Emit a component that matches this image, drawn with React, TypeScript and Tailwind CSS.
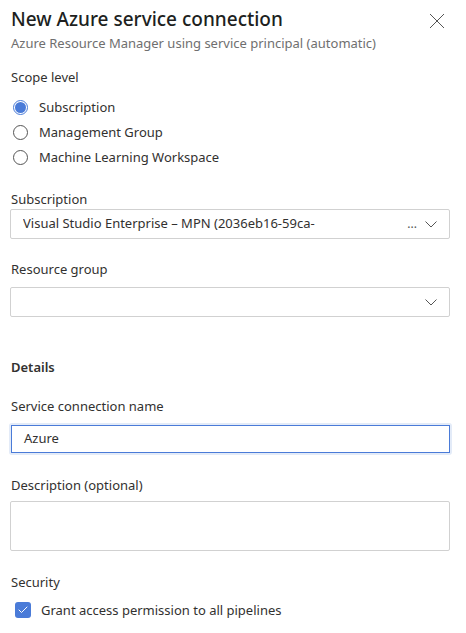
import { Check } from "lucide-react";

const font = { fontFamily: '"Segoe UI", "Noto Sans", sans-serif' };

function Radio({ label, checked }: { label: string; checked?: boolean }) {
  return (
    <div className="flex h-[25px] items-center gap-[11px] pl-[13px]">
      {checked ? (
        <span className="flex h-[15px] w-[15px] items-center justify-center rounded-full border border-[#4a7bd8]">
          <span className="h-[11px] w-[11px] rounded-full bg-[#4a7bd8]" />
        </span>
      ) : (
        <span className="h-[15px] w-[15px] rounded-full border border-[#555]" />
      )}
      <span className="text-[13px] text-[#323130]">{label}</span>
    </div>
  );
}

function Dropdown({ value }: { value?: string }) {
  return (
    <div className="ml-[10px] mr-[16px] flex h-[30px] items-center rounded-[2px] border border-[#d1d1d1] pl-[12px] pr-[12px]">
      <span className="flex-1 truncate text-[13px] text-[#323130]">{value}</span>
      {value && <span className="mr-[8px] text-[12px] text-[#555]">...</span>}
      <svg width="12" height="7" viewBox="0 0 12 7">
        <path d="M0.5 0.5L6 6L11.5 0.5" stroke="#555" strokeWidth="1" fill="none" />
      </svg>
    </div>
  );
}

export default function App() {
  return (
    <div className="min-h-screen w-[466px] bg-white pt-[5px] text-[#323130]" style={font}>
      {/* header */}
      <div className="flex items-start justify-between pl-[11px] pr-[21px]">
        <div>
          <h1 className="text-[19px] leading-[28px] font-medium text-[#201f1e]">
            New Azure service connection
          </h1>
          <p className="text-[13px] leading-[20px] text-[#6f6f6f]">
            Azure Resource Manager using service principal (automatic)
          </p>
        </div>
        <svg className="mt-[8px]" width="16" height="16" viewBox="0 0 16 16">
          <path d="M1 1L15 15M15 1L1 15" stroke="#555" strokeWidth="1" fill="none" />
        </svg>
      </div>

      {/* scope level */}
      <p className="mt-[14px] pl-[11px] text-[13px] leading-[20px]">Scope level</p>
      <div className="mt-[8px]">
        <Radio label="Subscription" checked />
        <Radio label="Management Group" />
        <Radio label="Machine Learning Workspace" />
      </div>

      {/* subscription */}
      <p className="mt-[19px] pl-[11px] text-[13px] leading-[20px]">Subscription</p>
      <Dropdown value="Visual Studio Enterprise – MPN (2036eb16-59ca-" />

      <p className="mt-[20px] mb-[8px] pl-[11px] text-[13px] leading-[20px]">Resource group</p>
      <Dropdown />

      {/* details */}
      <p className="mt-[40px] pl-[11px] text-[13px] leading-[20px] font-semibold">Details</p>

      <p className="mt-[19px] pl-[11px] text-[13px] leading-[20px]">Service connection name</p>
      <div className="ml-[9px] mr-[14px] mt-[7px] rounded-[3px] border-[2px] border-[#e3ebf8]">
        <div className="flex h-[28px] items-center border border-[#4a7bd8] pl-[12px] text-[13px]">
          Azure
        </div>
      </div>

      <p className="mt-[20px] pl-[11px] text-[13px] leading-[20px]">Description (optional)</p>
      <div className="ml-[10px] mr-[16px] mt-[6px] h-[50px] rounded-[2px] border border-[#d1d1d1]" />

      {/* security */}
      <p className="mt-[21px] pl-[11px] text-[13px] leading-[20px]">Security</p>
      <div className="mt-[8px] flex items-center gap-[10px] pl-[15px]">
        <span className="flex h-[16px] w-[16px] items-center justify-center rounded-[3px] bg-[#4a7bd8]">
          <Check className="h-[12px] w-[12px] text-white" strokeWidth={2} />
        </span>
        <span className="text-[13px] leading-[20px]">Grant access permission to all pipelines</span>
      </div>
    </div>
  );
}
